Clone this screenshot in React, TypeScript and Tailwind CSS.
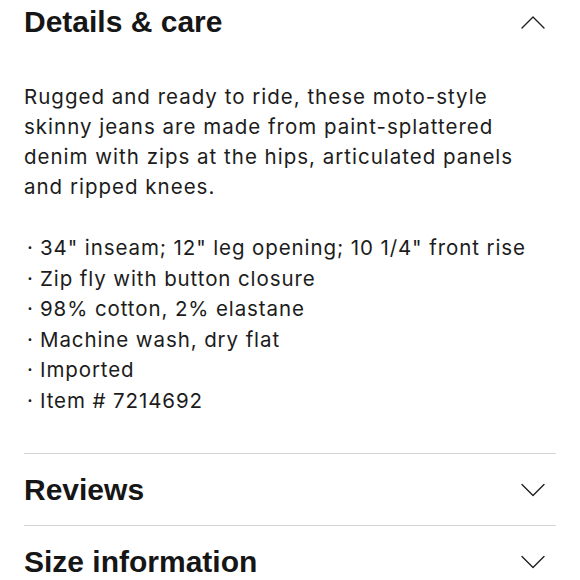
import React from 'react';

const Chevron: React.FC<{ up?: boolean }> = ({ up }) => (
  <svg width="24" height="14" viewBox="0 0 24 14" fill="none" className="shrink-0">
    <polyline
      points={up ? '1,13 12,2 23,13' : '1,1.5 12,12.5 23,1.5'}
      stroke="#1f1f1f"
      strokeWidth="1.4"
      strokeLinecap="round"
      strokeLinejoin="round"
    />
  </svg>
);

const App: React.FC = () => {
  const bullets = [
    '34" inseam; 12" leg opening; 10 1/4" front rise',
    'Zip fly with button closure',
    '98% cotton, 2% elastane',
    'Machine wash, dry flat',
    'Imported',
    'Item # 7214692',
  ];

  return (
    <div className="w-[580px] h-[580px] overflow-hidden bg-white text-[#1c1c1c]">
      <div className="px-[24px]">
        <div className="flex items-center justify-between h-[44px] pr-[11px]">
          <h2 className="font-['Liberation_Sans',Arial,sans-serif] font-bold text-[30px] leading-none text-[#161616]">
            Details &amp; care
          </h2>
          <Chevron up />
        </div>

        <p className="mt-[38px] font-['Inter',sans-serif] text-[20.5px] leading-[30px] tracking-[1px] pr-[20px]">
          Rugged and ready to ride, these moto-style skinny jeans are made from paint-splattered denim with zips at the hips, articulated panels and ripped knees.
        </p>

        <ul className="mt-[31px] font-['Inter',sans-serif] text-[20.5px] leading-[30.5px] tracking-[0.9px]">
          {bullets.map((b, i) => (
            <li key={i} className="flex">
              <span className="w-[16px] pl-[3px]">·</span>
              <span>{b}</span>
            </li>
          ))}
        </ul>

        <div className="mt-[37px] border-t border-[#d4d4d4]">
          <div className="flex items-center justify-between h-[71px] pr-[11px]">
            <h2 className="font-['Liberation_Sans',Arial,sans-serif] font-bold text-[30px] leading-none text-[#161616]">
              Reviews
            </h2>
            <Chevron />
          </div>
        </div>
        <div className="border-t border-[#d4d4d4]">
          <div className="flex items-center justify-between h-[71px] pr-[11px]">
            <h2 className="font-['Liberation_Sans',Arial,sans-serif] font-bold text-[30px] leading-none text-[#161616]">
              Size information
            </h2>
            <Chevron />
          </div>
        </div>
      </div>
    </div>
  );
};

export default App;
